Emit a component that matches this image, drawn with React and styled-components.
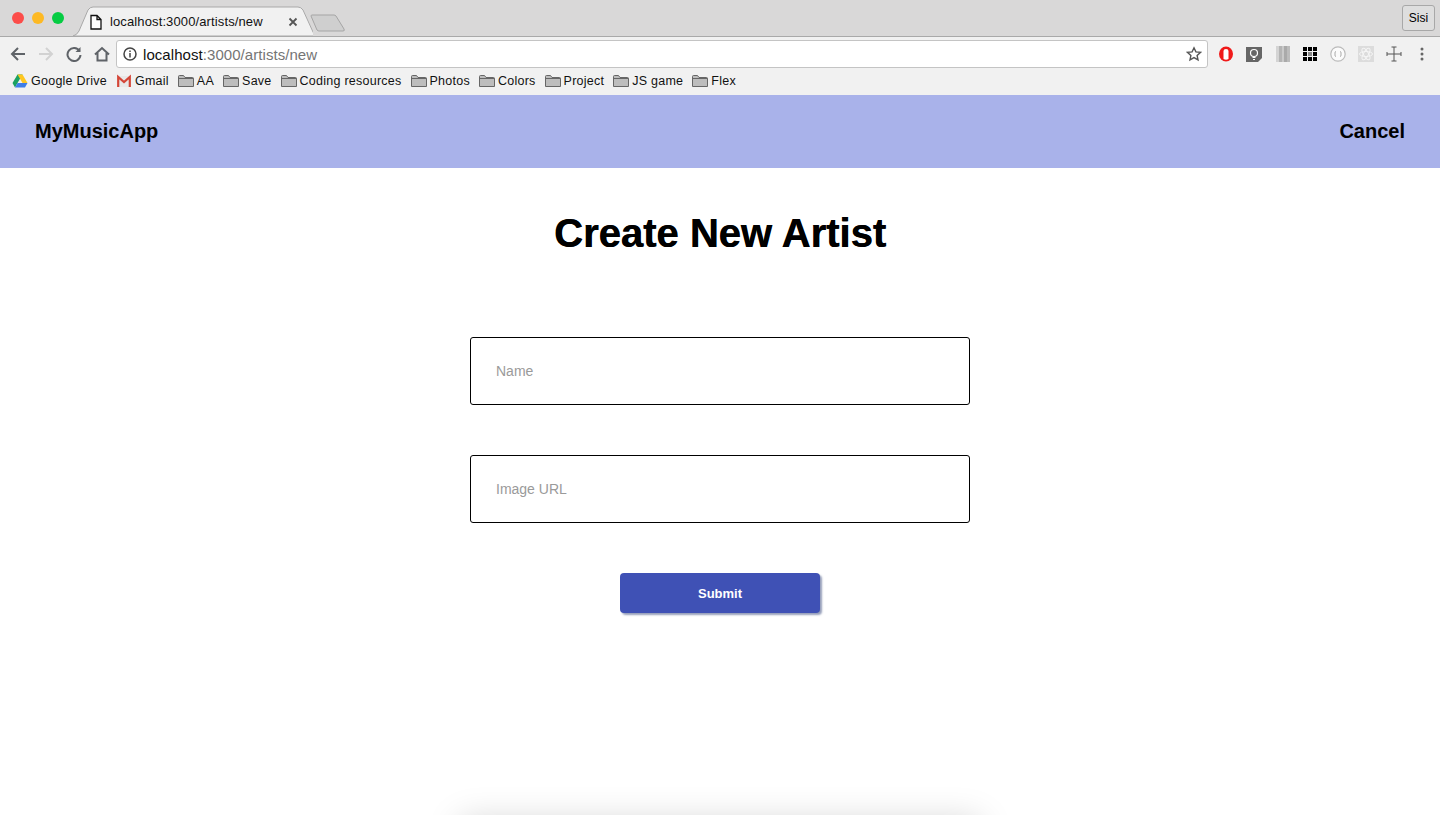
import React from "react";
import styled, { createGlobalStyle } from "styled-components";

const Global = createGlobalStyle`
  html, body { margin: 0; padding: 0; background: #fff; }
  body { font-family: "Liberation Sans", Arial, sans-serif; color: #000; }
  * { box-sizing: border-box; }
`;

const Page = styled.div`
  height: 815px;
  overflow: hidden;
  display: flex;
  flex-direction: column;
`;

const TabStrip = styled.div`
  height: 36px;
  flex: none;
  background: #d9d8d8;
  display: flex;
  align-items: flex-start;
  padding: 0 5px 0 12px;
  position: relative;
`;
const Lights = styled.div`
  display: flex;
  gap: 8px;
  margin-top: 12px;
  width: 61px;
`;
const Light = styled.span`
  width: 12px;
  height: 12px;
  border-radius: 50%;
  background: ${(p) => p.$c};
`;
const Tab = styled.div`
  position: relative;
  width: 240px;
  height: 36px;
  flex: none;
  font-size: 13px;
  letter-spacing: 0.12px;
  display: flex;
  align-items: center;
  padding: 7px 12px 0 15px;
`;
const TabShape = styled.svg`
  position: absolute;
  left: 0;
  top: 0;
  width: 240px;
  height: 36px;
`;
const TabContent = styled.div`
  position: relative;
  display: flex;
  align-items: center;
  width: 100%;
  color: #111;
`;
const TabTitle = styled.span`
  margin-left: 6px;
  flex: 1;
  white-space: nowrap;
`;
const NewTab = styled.svg`
  width: 36px;
  height: 20px;
  margin: 14px 0 0 -3px;
  flex: none;
`;
const Profile = styled.div`
  margin-left: auto;
  margin-top: 5px;
  width: 33px;
  height: 26px;
  border: 1px solid #a8a8a8;
  border-radius: 3px;
  background: #dedede;
  font-size: 12px;
  display: flex;
  align-items: center;
  justify-content: center;
`;

const Toolbar = styled.div`
  height: 32px;
  flex: none;
  background: #f1f1f1;
  border-top: 1px solid #a9a9a9;
  display: flex;
  align-items: center;
  padding: 3px 10px 0 10px;
`;
const NavIcons = styled.div`
  display: flex;
  align-items: center;
  gap: 12px;
  width: 106px;
  flex: none;
`;
const Omnibox = styled.div`
  width: 1092px;
  height: 28px;
  background: #fff;
  border: 1px solid #c4c4c4;
  border-radius: 3px;
  display: flex;
  align-items: center;
  padding: 0 5px 0 5px;
  font-size: 15px;
  letter-spacing: 0.06px;
`;
const Url = styled.span`
  margin-left: 5px;
  flex: 1;
  color: #757575;
  b { font-weight: 400; color: #111; }
`;
const Extensions = styled.div`
  display: flex;
  align-items: center;
  margin-left: 10px;
  gap: 12px;
`;
const Ext = styled.svg`
  width: 16px;
  height: 16px;
  flex: none;
`;

const Bookmarks = styled.div`
  height: 27px;
  flex: none;
  background: #f1f1f1;
  display: flex;
  align-items: center;
  padding: 0 0 1px 12px;
  gap: 9px;
  font-size: 12.5px;
  letter-spacing: 0.25px;
  color: #111;
`;
const Bookmark = styled.div`
  display: flex;
  align-items: center;
  gap: 3px;
  white-space: nowrap;
`;
const Glyph = styled.svg`
  width: 16px;
  height: 16px;
  flex: none;
`;

const NavBar = styled.header`
  height: 73px;
  flex: none;
  background: #a9b2ea;
  display: flex;
  align-items: center;
  justify-content: space-between;
  padding: 0 35px;
  font-size: 20px;
  font-weight: 700;
`;
const Main = styled.main`
  display: flex;
  flex-direction: column;
  align-items: center;
  flex: none;
`;
const Title = styled.h1`
  margin: 42px 0 0;
  font-size: 40px;
  line-height: 46px;
  font-weight: 700;
  text-shadow: 0.5px 0 0 #000;
`;
const Form = styled.form`
  display: flex;
  flex-direction: column;
  align-items: center;
  margin-top: 81px;
  gap: 50px;
`;
const Field = styled.input`
  width: 500px;
  height: 68px;
  flex: none;
  border: 1px solid #000;
  border-radius: 3px;
  padding: 0 25px;
  font: 14px "Liberation Sans", Arial, sans-serif;
  outline: none;
  &::placeholder { color: #9a9a9a; opacity: 1; }
`;
const Submit = styled.button`
  width: 200px;
  height: 40px;
  flex: none;
  border: none;
  border-radius: 4px;
  background: #3f51b5;
  color: #fff;
  font: 700 13px "Liberation Sans", Arial, sans-serif;
  box-shadow: 2px 2px 2px rgba(63, 81, 130, 0.55);
`;
const BelowFold = styled.div`
  width: 520px;
  height: 100px;
  flex: none;
  margin: 207px auto 0;
  background: #fff;
  box-shadow: 0 0 34px rgba(0, 0, 0, 0.17);
`;

const Stroke = { fill: "none", stroke: "#5f6368", strokeWidth: 2 };

const Folder = () => (
  <Glyph viewBox="0 0 16 16">
    <path d="M.5 13.5V3.5q0-1 1-1h4l1.5 2h7.5q1 0 1 1v8z" fill="#bdbdbd" stroke="#666" strokeWidth="1" />
    <path d="M.5 5.5h15" stroke="#666" strokeWidth="1" />
  </Glyph>
);

const bookmarks = ["AA", "Save", "Coding resources", "Photos", "Colors", "Project", "JS game", "Flex"];

export default function App() {
  return (
    <Page>
      <Global />
      <TabStrip>
        <Lights>
          <Light $c="#fc4d4a" />
          <Light $c="#fdb924" />
          <Light $c="#06cc43" />
        </Lights>
        <Tab>
          <TabShape viewBox="0 0 240 36">
            <path d="M0 36 Q4 35 6 31 L15 10 Q17 7 20 7 H225 Q228 7 230 10 L240 32 Q241 35 244 36 Z" fill="#f1f1f1" stroke="#a9a9a9" />
          </TabShape>
          <TabContent>
            <Glyph viewBox="0 0 16 16">
              <path d="M3 1.500h6l4 4v9.500H3z M9 1.500v4h4" fill="#fff" stroke="#111" strokeWidth="1.300" />
            </Glyph>
            <TabTitle>localhost:3000/artists/new</TabTitle>
            <Glyph viewBox="0 0 16 16">
              <path d="M4.500 4.500l7 7M11.500 4.500l-7 7" stroke="#555" strokeWidth="1.800" />
            </Glyph>
          </TabContent>
        </Tab>
        <NewTab viewBox="0 0 36 20">
          <path d="M1 2q0-1 1-1h22q1 0 2 1l8 13q1 2-1 2H9q-1 0-2-1z" fill="#cfcfcf" stroke="#a5a5a5" />
        </NewTab>
        <Profile>Sisi</Profile>
      </TabStrip>

      <Toolbar>
        <NavIcons>
          <Glyph viewBox="0 0 16 16" {...Stroke}><path d="M15 8H2M8 2 2 8l6 6" /></Glyph>
          <Glyph viewBox="0 0 16 16" {...Stroke} stroke="#d2d2d2"><path d="M1 8h13M8 2l6 6-6 6" /></Glyph>
          <Glyph viewBox="0 0 16 16" {...Stroke}>
            <path d="M13.500 5A6.500 6.500 0 1 0 14.500 9" />
            <path d="M14.500 1v5h-5z" fill="#5f6368" stroke="none" />
          </Glyph>
          <Glyph viewBox="0 0 16 16" {...Stroke}><path d="M1 8.500 8 2l7 6.500M3.500 7v7.500h9V7" /></Glyph>
        </NavIcons>
        <Omnibox>
          <Glyph viewBox="0 0 16 16">
            <circle cx="8" cy="8" r="6" fill="none" stroke="#444" strokeWidth="1.500" />
            <path d="M8 7v4.500M8 4.500v1.500" stroke="#444" strokeWidth="1.500" />
          </Glyph>
          <Url><b>localhost</b>:3000/artists/new</Url>
          <Glyph viewBox="0 0 16 16">
            <path d="M8 1.800l1.900 4.100 4.500.5-3.300 3 .9 4.500L8 11.600l-4 2.300.9-4.500-3.300-3 4.500-.5z" fill="none" stroke="#555" strokeWidth="1.400" />
          </Glyph>
        </Omnibox>
        <Extensions>
          <Ext viewBox="0 0 16 16">
            <ellipse cx="8" cy="8" rx="7" ry="7.500" fill="#f01a1a" />
            <path d="M5.500 13V5q0-2 2.500-2t2.500 2v8q-2.500 1.500-5 0z" fill="#fff" />
          </Ext>
          <Ext viewBox="0 0 16 16">
            <path d="M0 1h16v11l-4 4H0z" fill="#666" />
            <circle cx="8" cy="7" r="3.500" fill="none" stroke="#fff" strokeWidth="1.200" />
            <path d="M6.500 11.500h3M7 13.500h2" stroke="#fff" />
          </Ext>
          <Ext viewBox="0 0 16 16">
            <rect x="0" y="0" width="2" height="16" fill="#f2f2f2" />
            <rect x="2" y="0" width="3" height="16" fill="#d4d4d4" />
            <rect x="5" y="0" width="3" height="16" fill="#b5b5b5" />
            <rect x="8" y="0" width="2" height="16" fill="#cacaca" />
            <rect x="10" y="0" width="3" height="16" fill="#aaa" />
            <rect x="13" y="0" width="3" height="16" fill="#bcbcbc" />
          </Ext>
          <Ext viewBox="0 0 16 16">
            <path d="M1 1h4v4H1zM6 1h4v4H6zM11 1h4v4h-4zM1 6h4v4H1zM11 6h4v4h-4zM1 11h4v4H1zM6 11h4v4H6zM11 11h4v4h-4z" fill="#000" />
            <rect x="6" y="6" width="4" height="4" fill="#888" />
          </Ext>
          <Ext viewBox="0 0 16 16">
            <circle cx="8" cy="8" r="7.200" fill="#fbfbfb" stroke="#bbb" strokeWidth="1.200" />
            <path d="M6 5.500q-1.500 0-1 2.500-.5 2.500 1 2.500M10 5.500q1.500 0 1 2.500.5 2.500-1 2.500" fill="none" stroke="#aaa" />
          </Ext>
          <Ext viewBox="0 0 16 16">
            <rect width="16" height="16" fill="#dcdcdc" />
            <ellipse cx="8" cy="8" rx="6.500" ry="2.500" fill="none" stroke="#f5f5f5" />
            <ellipse cx="8" cy="8" rx="6.500" ry="2.500" fill="none" stroke="#f5f5f5" transform="rotate(60 8 8)" />
            <ellipse cx="8" cy="8" rx="6.500" ry="2.500" fill="none" stroke="#f5f5f5" transform="rotate(120 8 8)" />
          </Ext>
          <Ext viewBox="0 0 16 16">
            <path d="M8 1v14M1 8h14M5.500 1h5M5.500 15h5M1 6v4M15 6v4" fill="none" stroke="#555" />
          </Ext>
          <Ext viewBox="0 0 16 16">
            <circle cx="8" cy="3" r="1.500" fill="#666" />
            <circle cx="8" cy="8" r="1.500" fill="#666" />
            <circle cx="8" cy="13" r="1.500" fill="#666" />
          </Ext>
        </Extensions>
      </Toolbar>

      <Bookmarks>
        <Bookmark>
          <Glyph viewBox="0 0 16 16">
            <path d="M5.500 1.500h5L5.500 10 3 14.500.5 10z" fill="#1ba261" />
            <path d="M5.500 1.500h5l5 8.500h-5z" fill="#ffc720" />
            <path d="M5.500 10h10L13 14.500H3z" fill="#3f7ee8" />
          </Glyph>
          Google Drive
        </Bookmark>
        <Bookmark>
          <Glyph viewBox="0 0 16 16">
            <path d="M2 3h13v11H2z" fill="#e8e8e8" />
            <path d="M2.200 14V4l5.800 5 5.800-5v10" fill="none" stroke="#d44638" strokeWidth="2.200" />
          </Glyph>
          Gmail
        </Bookmark>
        {bookmarks.map((b) => (
          <Bookmark key={b}>
            <Folder />
            {b}
          </Bookmark>
        ))}
      </Bookmarks>

      <NavBar>
        <span>MyMusicApp</span>
        <span>Cancel</span>
      </NavBar>

      <Main>
        <Title>Create New Artist</Title>
        <Form>
          <Field placeholder="Name" />
          <Field placeholder="Image URL" />
          <Submit type="button">Submit</Submit>
        </Form>
      </Main>
      <BelowFold />
    </Page>
  );
}
